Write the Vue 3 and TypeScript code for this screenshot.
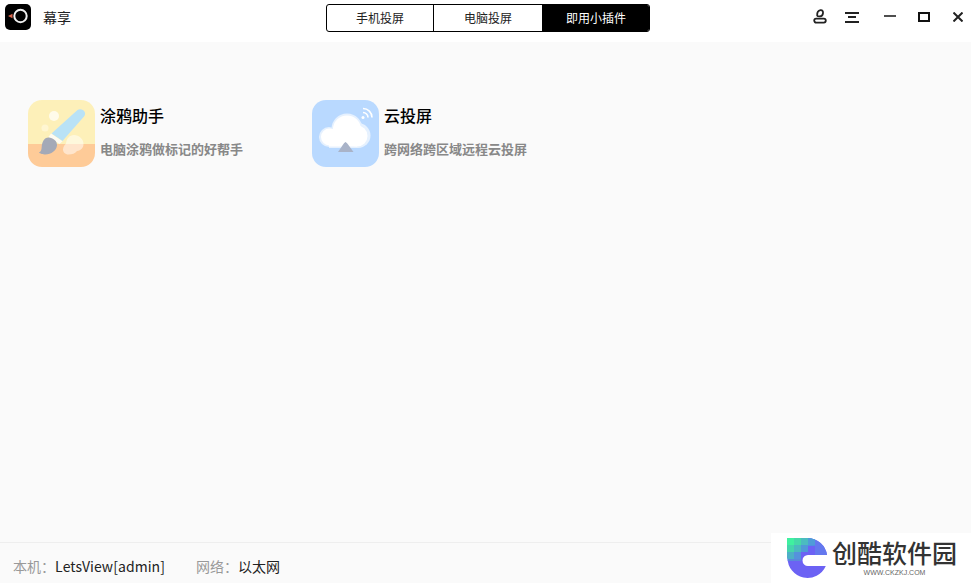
<script setup lang="ts">
const tabs = [
  { label: '手机投屏', active: false },
  { label: '电脑投屏', active: false },
  { label: '即用小插件', active: true },
]
</script>

<template>
  <div class="app">
    <header class="bar">
      <div class="brand">
        <svg class="logo" width="26" height="26" viewBox="0 0 26 26">
          <rect width="26" height="26" rx="5" fill="#000" />
          <circle cx="15.500" cy="12" r="6.200" fill="none" stroke="#f0f0f0" stroke-width="2" />
          <path d="M3 12L7.500 9.800V14.200Z" fill="#d9644a" />
        </svg>
        <span class="app-name">幕享</span>
      </div>
      <nav class="tabs">
        <div v-for="t in tabs" :key="t.label" class="tab" :class="{ active: t.active }">{{ t.label }}</div>
      </nav>
      <div class="tools">
        <svg class="t-user" width="14" height="15" viewBox="0 0 14 15" fill="none" stroke="#222" stroke-width="1.8">
          <path d="M4.200 6.600C4 3.600 5 1.600 7.500 1.200C9.600 1 10.200 2.400 10 4.200C9.800 6.200 8.600 7.400 7 7.400C5.700 7.400 4.400 7.200 4.200 6.600Z" />
          <rect x="1.200" y="9.600" width="11.600" height="4" rx="2" />
        </svg>
        <svg class="t-list" width="14" height="11" viewBox="0 0 14 11" fill="none" stroke="#222" stroke-width="1.8">
          <path d="M0 1H14M3 5H11M0 10H14" />
        </svg>
        <svg class="t-min" width="12" height="2" viewBox="0 0 12 2" fill="none" stroke="#222" stroke-width="1.6">
          <path d="M0 1H12" />
        </svg>
        <svg class="t-max" width="12" height="10" viewBox="0 0 12 10" fill="none" stroke="#111" stroke-width="2">
          <rect x="1" y="1" width="10" height="8" />
        </svg>
        <svg class="t-close" width="10" height="10" viewBox="0 0 10 10" fill="none" stroke="#222" stroke-width="2">
          <path d="M0.500 0.500L9.500 9.500M9.500 0.500L0.500 9.500" />
        </svg>
      </div>
    </header>

    <main class="content">
      <div class="plugin">
        <svg class="icon" width="67" height="67" viewBox="0 0 67 67">
          <defs>
            <clipPath id="brush-clip"><rect width="67" height="67" rx="14" /></clipPath>
          </defs>
          <g clip-path="url(#brush-clip)">
            <rect width="67" height="44" fill="#fdf0b9" />
            <rect y="44" width="67" height="23" fill="#fecb98" />
            <circle cx="26" cy="16" r="5" fill="#fffbea" />
            <circle cx="17" cy="28" r="3.500" fill="#fff6d2" />
            <g fill="#fff" opacity="0.5">
              <path d="M46 35C51 35 55.500 39 55.500 44C55.500 48 53 50.500 49 51C47.500 53.500 44 54.500 40.500 54.500C37 54.500 35 52 35 49.500C35 46.500 37 44.500 38 43.500C38.500 38.500 41.500 35 46 35Z" />
            </g>
            <path d="M49.500 10C52 8.500 55.500 9.500 56.700 12C57.500 13.800 57 15.200 56 16.500L34.500 41L23.500 33.500Z" fill="#b9e2f6" />
            <path d="M23 33.500L34.500 41.300L31.500 44L20.500 37Z" fill="#fdfbf2" />
            <path d="M20.500 37.500C25 38 29.500 41 29 45.500C28.500 50.500 23 54.800 16.500 54.500C14 54.400 11 53 11 52.300C13 51.800 13.500 50 13.700 47C14 42.500 16 37.500 20.500 37.500Z" fill="#a4a9b7" />
          </g>
        </svg>
        <div class="info">
          <div class="name">涂鸦助手</div>
          <div class="desc">电脑涂鸦做标记的好帮手</div>
        </div>
      </div>
      <div class="plugin">
        <svg class="icon" width="67" height="67" viewBox="0 0 67 67">
          <rect width="67" height="67" rx="14" fill="#b9d9ff" />
          <g fill="#e6f1fe">
            <circle cx="35" cy="29" r="15.500" />
            <circle cx="17" cy="37" r="10" />
            <circle cx="46" cy="35.500" r="12.500" />
            <rect x="17" y="35" width="29" height="13" />
          </g>
          <g fill="#fff">
            <circle cx="35" cy="29.500" r="14" />
            <circle cx="17.500" cy="37" r="8.500" />
            <circle cx="45" cy="36" r="10.500" />
            <rect x="17" y="35" width="28" height="11.500" />
          </g>
          <path d="M33.500 41L41.500 52H26Z" fill="#a9b3c8" />
          <path d="M33.500 38L38.500 45L33.500 42L28.500 45Z" fill="#fff" />
          <circle cx="51" cy="17.500" r="1.500" fill="#fff" />
          <g fill="none" stroke="#fff" stroke-width="1.600">
            <path d="M51 12.500A5 5 0 0 1 56 17.500" />
            <path d="M51 8.500A9 9 0 0 1 60 17.500" />
          </g>
        </svg>
        <div class="info">
          <div class="name">云投屏</div>
          <div class="desc">跨网络跨区域远程云投屏</div>
        </div>
      </div>
    </main>

    <footer class="status">
      <span class="label">本机：</span><span class="value host">LetsView[admin]</span>
      <span class="label">网络：</span><span class="value">以太网</span>
    </footer>

    <div class="watermark">
      <svg class="wm-logo" width="41" height="40" viewBox="0 0 41 40">
        <defs>
          <clipPath id="wm-clip">
            <path d="M0 0H21A20 20 0 0 1 40 17H21A5.500 5.500 0 0 0 21 28H38.800A20 20 0 0 1 0.500 20Q0 20 0 17Z" />
          </clipPath>
        </defs>
        <g clip-path="url(#wm-clip)">
          <rect width="41" height="40" fill="#6c62f4" />
          <rect x="28" y="0" width="14" height="17" fill="#6478ee" />
          <rect x="14" y="0" width="14" height="8" fill="#4f8fe0" />
          <rect x="0" y="14" width="14" height="9" fill="#5a88dc" />
          <rect x="0" y="0" width="7" height="7" fill="#3ff0a0" />
          <rect x="7" y="0" width="7" height="7" fill="#45d8a8" />
          <rect x="14" y="0" width="7" height="7" fill="#4bbcc0" />
          <rect x="21" y="0" width="7" height="7" fill="#4f9cd8" />
          <rect x="0" y="7" width="7" height="7" fill="#45d4ac" />
          <rect x="7" y="7" width="7" height="7" fill="#4bb8c0" />
          <rect x="14" y="7" width="7" height="7" fill="#5098d8" />
          <rect x="0" y="14" width="7" height="7" fill="#4db0c6" />
          <rect x="7" y="14" width="7" height="7" fill="#5592dc" />
        </g>
      </svg>
      <div class="wm-text">
        <div class="wm-cn">创酷软件园</div>
        <div class="wm-en">WWW.CKZKJ.COM</div>
      </div>
    </div>
  </div>
</template>

<style scoped>
.app {
  position: relative;
  display: flex;
  flex-direction: column;
  width: 971px;
  height: 583px;
  overflow: hidden;
  background: #fafafa;
  font-family: "Noto Sans CJK SC", "Noto Sans", sans-serif;
  color: #000;
}
.bar {
  display: flex;
  flex: none;
  height: 42px;
  background: #fff;
}
.brand {
  display: flex;
  align-items: flex-start;
  width: 326px;
  padding: 4px 0 0 5px;
  box-sizing: border-box;
}
.logo {
  display: block;
}
.app-name {
  margin-left: 12px;
  font-size: 14px;
  line-height: 26px;
  color: #222;
}
.tabs {
  display: flex;
  align-self: flex-start;
  height: 28px;
  margin-top: 4px;
  box-sizing: border-box;
  border: 1px solid #000;
  border-radius: 3px;
  overflow: hidden;
}
.tab {
  width: 106px;
  box-sizing: border-box;
  font-size: 12px;
  line-height: 26px;
  text-align: center;
  color: #222;
}
.tab + .tab {
  border-left: 1px solid #000;
  width: 109px;
}
.tab.active {
  background: #000;
  color: #fff;
  width: 107px;
}
.tools {
  position: relative;
  display: flex;
  align-items: flex-start;
  margin-left: 163px;
}
.tools svg {
  display: block;
  flex: none;
}
.t-user { margin-top: 9px; }
.t-list { margin-top: 12px; margin-left: 18px; }
.t-min { margin-top: 15px; margin-left: 25px; }
.t-max { margin-top: 12px; margin-left: 22px; }
.t-close { margin-top: 12px; margin-left: 23px; }
.content {
  flex: 1;
  display: grid;
  grid-template-columns: 284px 284px;
  align-content: start;
  padding: 58px 0 0 28px;
}
.plugin {
  display: flex;
  height: 67px;
}
.icon {
  display: block;
  flex: none;
}
.info {
  margin-left: 5px;
}
.name {
  font-size: 16px;
  font-weight: 500;
  line-height: 30px;
  color: #000;
}
.desc {
  margin-top: 3px;
  font-size: 13px;
  font-weight: 700;
  line-height: 32px;
  color: #888;
}
.status {
  flex: none;
  display: flex;
  align-items: center;
  height: 41px;
  padding: 6px 0 0 13px;
  box-sizing: border-box;
  border-top: 1px solid #eee;
  font-size: 14px;
}
.label {
  color: #999;
}
.value {
  color: #222;
}
.host {
  width: 141px;
  letter-spacing: 0.06px;
}
.watermark {
  position: absolute;
  right: 0;
  bottom: 0;
  display: flex;
  width: 200px;
  height: 50px;
  padding: 5px 0 0 16px;
  box-sizing: border-box;
  background: #fff;
}
.wm-logo {
  display: block;
  flex: none;
}
.wm-text {
  margin-left: 4px;
  text-align: center;
}
.wm-cn {
  width: 125px;
  font-size: 25px;
  line-height: 28px;
  font-weight: 500;
  color: #333;
}
.wm-en {
  font-family: "Liberation Sans", sans-serif;
  font-size: 7px;
  line-height: 9px;
  margin-top: 2px;
  color: #666;
}
</style>
